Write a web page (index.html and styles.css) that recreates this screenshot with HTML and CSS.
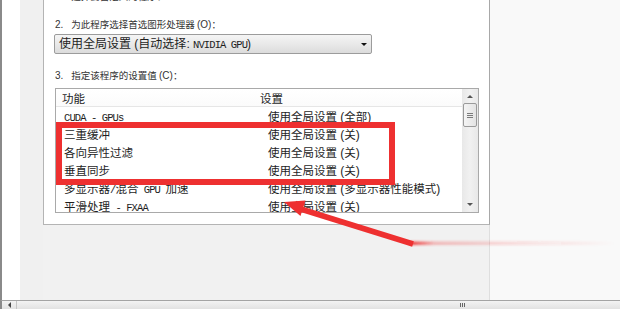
FILE: index.html
```html
<!DOCTYPE html>
<html lang="zh-CN">
<head>
<meta charset="utf-8">
<title>管理 3D 设置</title>
<link rel="stylesheet" href="styles.css">
</head>
<body>
<div class="screen">
  <div class="main">
    <div class="edge"></div>
    <div class="strip"></div>
    <div class="gutter"></div>
    <div class="panelcol">
      <div class="panel">
        <div class="label cut"><span class="num">1.</span>选择要自定义的程序：</div>
        <div class="label l2"><span class="num">2.</span>为此程序选择首选图形处理器 <span class="lat">(O)</span>：</div>
        <div class="select">
          <span class="sel-text">使用全局设置<span class="p"> (</span>自动选择<span class="p">: </span><span class="mono">NVIDIA GPU</span><span class="p">)</span></span>
          <span class="caret"></span>
        </div>
        <div class="label l3"><span class="num">3.</span>指定该程序的设置值 <span class="lat">(C)</span>：</div>
        <div class="listbox">
          <div class="list">
            <div class="row head"><div class="c1">功能</div><div class="c2">设置</div></div>
            <div class="row"><div class="c1"><span class="mono">CUDA - GPUs</span></div><div class="c2">使用全局设置<span class="p"> (</span>全部<span class="p">)</span></div></div>
            <div class="row"><div class="c1">三重缓冲</div><div class="c2">使用全局设置<span class="p"> (</span>关<span class="p">)</span></div></div>
            <div class="row"><div class="c1">各向异性过滤</div><div class="c2">使用全局设置<span class="p"> (</span>关<span class="p">)</span></div></div>
            <div class="row"><div class="c1">垂直同步</div><div class="c2">使用全局设置<span class="p"> (</span>关<span class="p">)</span></div></div>
            <div class="row"><div class="c1">多显示器<span class="mono">/</span>混合<span class="mono"> GPU </span>加速</div><div class="c2">使用全局设置<span class="p"> (</span>多显示器性能模式<span class="p">)</span></div></div>
            <div class="row"><div class="c1">平滑处理<span class="mono"> - FXAA</span></div><div class="c2">使用全局设置<span class="p"> (</span>关<span class="p">)</span></div></div>
          </div>
          <div class="vscroll">
            <div class="vbtn"><span class="tri-up"></span></div>
            <div class="thumb"><span class="grip"></span><span class="grip"></span><span class="grip"></span></div>
            <div class="track"></div>
            <div class="vbtn down"><span class="tri-down"></span></div>
          </div>
        </div>
      </div>
    </div>
    <div class="rightarea"></div>
  </div>
  <div class="hscroll">
    <div class="hbtn"><span class="tri-left"></span></div>
    <div class="htrack">
      <div class="hgrip"><span></span><span></span><span></span></div>
    </div>
  </div>
  <svg class="annot" width="620" height="309" viewBox="0 0 620 309">
    <defs>
      <linearGradient id="trail" x1="0" y1="0" x2="1" y2="0">
        <stop offset="0" stop-color="#ee3030" stop-opacity="0.95"/>
        <stop offset="0.12" stop-color="#ee3030" stop-opacity="0.3"/>
        <stop offset="0.6" stop-color="#ee3030" stop-opacity="0.12"/>
        <stop offset="1" stop-color="#ee3030" stop-opacity="0"/>
      </linearGradient>
      <filter id="soft" x="-5%" y="-200%" width="110%" height="500%">
        <feGaussianBlur stdDeviation="1"/>
      </filter>
    </defs>
    <rect x="59" y="125" width="333" height="57" fill="none" stroke="#ee3030" stroke-width="6"/>
    <rect x="410" y="241.5" width="205" height="3.5" fill="url(#trail)" filter="url(#soft)"/>
    <line x1="299" y1="208.5" x2="413" y2="244" stroke="#ee3030" stroke-width="5.5"/>
    <polygon points="284,202 305.5,200.6 300.5,216" fill="#ee3030"/>
  </svg>
</div>
</body>
</html>
```
FILE: styles.css
```css
* { box-sizing: border-box; }
html, body { margin: 0; padding: 0; }
body {
  width: 620px;
  height: 309px;
  overflow: hidden;
  background: #f0f0f0;
  font-family: "Noto Sans CJK SC", sans-serif;
  color: #2a2a2a;
}
.screen {
  position: relative;
  width: 620px;
  height: 309px;
  display: flex;
  flex-direction: column;
}
.main {
  display: flex;
  height: 300px;
}
.edge { width: 2px; background: #8a8a8a; }
.strip { width: 18px; background: #ffffff; }
.gutter { width: 23px; background: #f0f0f0; }
.panelcol {
  width: 447px;
  background: #f1f1f1;
  border-right: 1px solid #dedede;
}
.rightarea { width: 130px; background: #f9f9f9; }

.panel {
  background: #ffffff;
  border-left: 1px solid #b4b4b4;
  border-right: 1px solid #a8a8a8;
  border-bottom: 1px solid #b4b4b4;
  margin-right: -1px;
  padding: 0 0 11px 11px;
}
.label {
  font-size: 9.5px;
  line-height: 14px;
  height: 14px;
  white-space: nowrap;
  color: #333;
}
.label .num {
  font-family: "Liberation Sans", sans-serif;
  font-size: 10px;
  margin-right: 8px;
}
.label .lat {
  font-family: "Liberation Sans", sans-serif;
  font-size: 10px;
}
.cut { margin-top: -11px; }
.l2 { margin-top: 14px; }
.l3 { margin-top: 14px; }

.select {
  margin-top: 3px;
  margin-left: -1px;
  width: 318px;
  height: 20px;
  border: 1px solid #9c9c9c;
  border-radius: 2px;
  background: linear-gradient(#f5f5f5, #e9e9e9 50%, #dcdcdc);
  display: flex;
  align-items: center;
  padding-left: 4px;
  font-size: 12px;
  line-height: 18px;
  color: #1e1e1e;
}
.sel-text { white-space: pre; }
.p {
  font-family: "Liberation Sans", sans-serif;
  font-size: 12px;
}
.caret {
  margin-left: auto;
  margin-right: 4px;
  width: 0;
  height: 0;
  border-left: 3px solid transparent;
  border-right: 3px solid transparent;
  border-top: 3px solid #111;
}
.mono {
  font-family: "Liberation Mono", monospace;
  font-size: 10.5px;
  letter-spacing: -0.9px;
}

.listbox {
  margin-top: 6px;
  width: 424px;
  height: 125px;
  border: 1px solid #a9a9a9;
  display: flex;
  overflow: hidden;
  background: #fff;
}
.list { flex: 1; overflow: hidden; }
.row {
  display: flex;
  height: 18px;
  line-height: 18px;
  font-size: 11.5px;
  white-space: pre;
  color: #1e1e1e;
}
.row .c1 { width: 204px; padding-left: 8px; }
.row .c2 { padding-left: 8px; }
.row.head {
  border-bottom: 1px solid #e6e6e6;
  background: linear-gradient(#ffffff, #fbfbfb);
}
.row.head .c1 { padding-left: 6px; }
.row.head .c2 { padding-left: 0; }

.vscroll {
  width: 16px;
  display: flex;
  flex-direction: column;
  background: linear-gradient(90deg, #e8e8e8, #f1f1f1 50%, #e8e8e8);
}
.vbtn {
  height: 14px;
  display: flex;
  align-items: center;
  justify-content: center;
}
.vbtn.down { height: 16px; }
.tri-up, .tri-down {
  width: 0; height: 0;
  border-left: 3px solid transparent;
  border-right: 3px solid transparent;
}
.tri-up { border-bottom: 3px solid #555; }
.tri-down { border-top: 3px solid #555; }
.thumb {
  height: 24px;
  margin: 0 1px;
  border: 1px solid #9a9a9a;
  border-radius: 2px;
  background: linear-gradient(90deg, #f4f4f4, #e3e3e3);
  display: flex;
  flex-direction: column;
  align-items: center;
  justify-content: center;
  gap: 1px;
}
.grip { width: 6px; height: 1px; background: #7a7a7a; }
.track { flex: 1; }

.hscroll {
  height: 9px;
  display: flex;
  border-top: 1px solid #a4a4a4;
  border-left: 2px solid #8a8a8a;
  background: linear-gradient(#f3f3f3, #e2e2e2);
}
.hbtn {
  width: 15px;
  display: flex;
  align-items: center;
  justify-content: center;
  border-right: 1px solid #c4c4c4;
}
.tri-left {
  width: 0; height: 0;
  border-top: 3px solid transparent;
  border-bottom: 3px solid transparent;
  border-right: 3px solid #444;
}
.htrack {
  flex: 1;
  display: flex;
  align-items: center;
  padding-left: 443px;
}
.hgrip { display: flex; gap: 1px; }
.hgrip span { width: 1px; height: 4px; background: #666; }

.annot {
  position: absolute;
  left: 0;
  top: 0;
  pointer-events: none;
}
```
